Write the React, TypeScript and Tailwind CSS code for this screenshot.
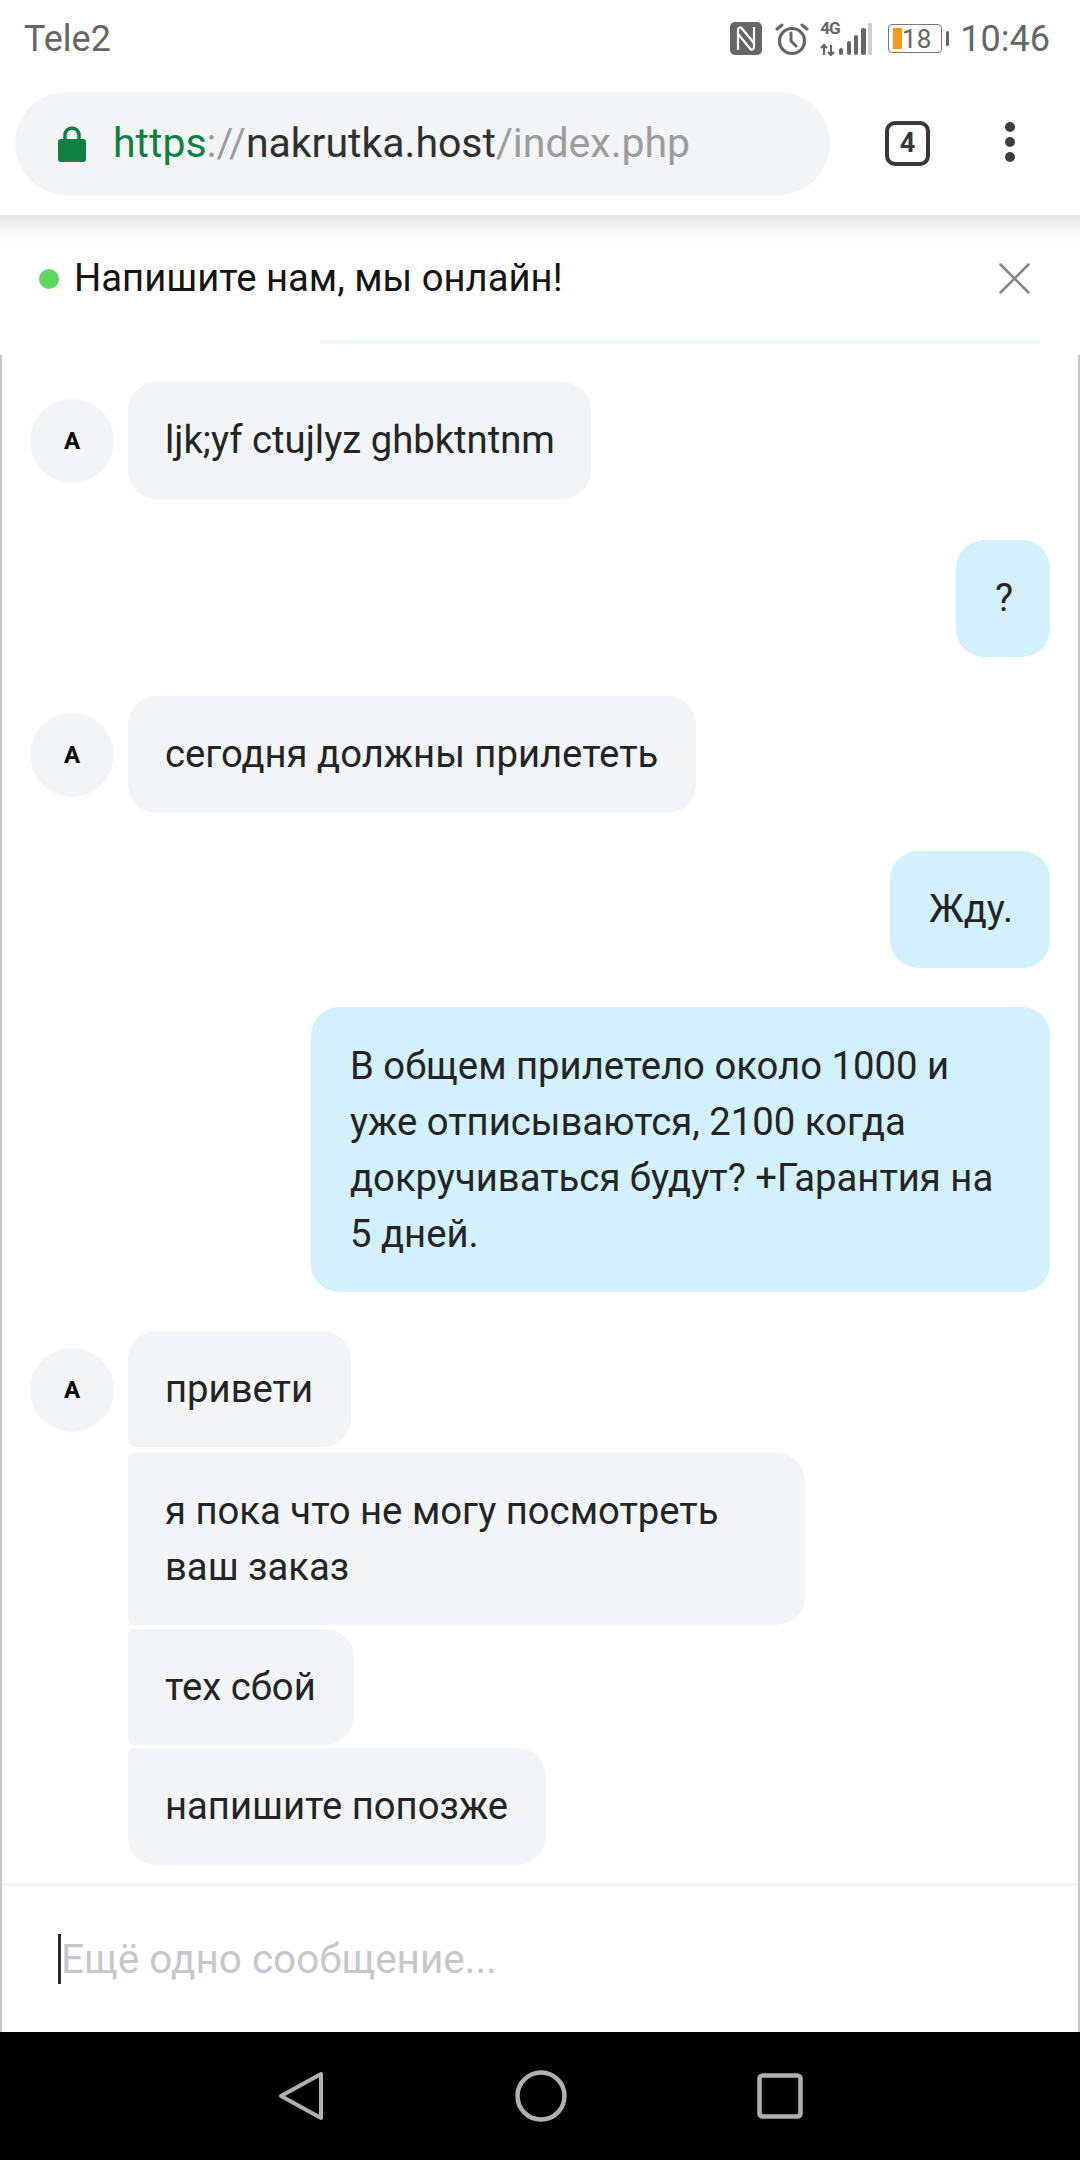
const font = { fontFamily: "Roboto, 'Noto Sans', sans-serif" };

function Incoming({ w, children, cls = "rounded-[28px] pb-[31px] whitespace-nowrap" }: { w: string; children: React.ReactNode; cls?: string }) {
  return <div className={`${w} ${cls} bg-[#f2f4f6] px-[37px] pt-[30px] text-[38.25px] leading-[56px] text-[#222426]`}>{children}</div>;
}
function Outgoing({ w, children, cls = "" }: { w: string; children: React.ReactNode; cls?: string }) {
  return <div className={`${w} ${cls} self-end rounded-[28px] bg-[#d2f1fc] px-[39px] text-[38.25px] leading-[56px] text-[#222426]`}>{children}</div>;
}
function Avatar() {
  return <div className="flex h-[84px] w-[84px] shrink-0 items-center justify-center rounded-full bg-[#f2f4f6] text-[24px] font-bold text-black">A</div>;
}

export default function App() {
  return (
    <div className="flex h-[2160px] w-[1080px] flex-col overflow-hidden bg-white font-['Roboto']" style={font}>
      {/* status bar */}
      <div className="flex h-[75px] shrink-0 items-center justify-between pl-[24px] pr-[30px] pt-[2px] text-[#666666]">
        <span className="text-[36px] leading-none">Tele2</span>
        <div className="flex items-center">
          <svg width="32" height="33" viewBox="0 0 32 33" className="mr-[13px]">
            <rect width="32" height="33" rx="5" fill="#666" />
            <path d="M8 28V8c0-2.500 2.500-3.500 4-1.500L24 21" fill="none" stroke="#fff" strokeWidth="2.200" />
            <path d="M24 5v20c0 2.500-2.500 3.500-4 1.500L8 12" fill="none" stroke="#fff" strokeWidth="2.200" />
          </svg>
          <svg width="34" height="34" viewBox="0 0 34 34" className="mr-[10px]" fill="none" stroke="#666" strokeLinecap="round">
            <circle cx="17" cy="19" r="12.500" strokeWidth="3.200" />
            <path d="M16 11v8l5 5" strokeWidth="3" />
            <path d="M2 7l5-4M32 7l-5-4" strokeWidth="3" />
          </svg>
          <div className="relative mr-[13px] h-[34px] w-[56px]">
            <span className="absolute left-[1px] top-[-3px] text-[17px] font-bold leading-[18px] tracking-[-1px] text-[#666]">4G</span>
            <svg width="56" height="34" viewBox="0 0 56 34" className="absolute left-0 top-0">
              <path d="M5 33V23M2 26l3-3 3 3" fill="none" stroke="#666" strokeWidth="2.200" />
              <path d="M12 23v10M9 30l3 3 3-3" fill="none" stroke="#666" strokeWidth="2.200" />
              <rect x="20" y="26" width="4" height="7" rx="2" fill="#666" />
              <rect x="28" y="19" width="4" height="14" rx="2" fill="#666" />
              <rect x="35" y="13" width="4" height="20" rx="2" fill="#666" />
              <rect x="42" y="6" width="5" height="27" rx="2" fill="#666" />
              <rect x="49" y="1" width="4" height="32" rx="1" fill="#cfcfcf" />
            </svg>
          </div>
          <div className="relative mr-[4px] flex h-[29px] w-[54px] items-center justify-end rounded-[4px] border border-[#777] pr-[10px] text-[26px] leading-none">
            <span className="absolute left-[4px] top-[3px] h-[21px] w-[9px] bg-[#fa9a1c]" />
            18
          </div>
          <span className="mr-[11px] h-[15px] w-[3px] rounded-sm bg-[#666]" />
          <span className="text-[36px] leading-none">10:46</span>
        </div>
      </div>

      {/* url bar */}
      <div className="flex h-[140px] shrink-0 items-start pl-[15px] pt-[17px]">
        <div className="flex h-[103px] w-[815px] items-center rounded-full bg-[#f2f4f5] pl-[43px] text-[41px] leading-none">
          <svg width="28" height="36" viewBox="0 0 28 36" className="mr-[27px] shrink-0">
            <path d="M7 16V9a7 7 0 0 1 14 0v7" fill="none" stroke="#0f8043" strokeWidth="3.500" />
            <rect y="13" width="28" height="23" rx="3" fill="#0f8043" />
          </svg>
          <span className="text-[#0f8043]">https</span>
          <span className="text-[#9a9c9e]">://</span>
          <span className="text-[#2e3033]">nakrutka.host</span>
          <span className="text-[#9a9c9e]">/index.php</span>
        </div>
        <div className="ml-[55px] mt-[29px] flex h-[45px] w-[45px] items-center justify-center rounded-[10px] border-[4px] border-[#36383b] text-[27px] font-bold leading-none text-[#36383b]">4</div>
        <div className="ml-[75px] mt-[30px] flex flex-col gap-[5px]">
          <span className="h-[10px] w-[10px] rounded-full bg-[#3c3e41]" />
          <span className="h-[10px] w-[10px] rounded-full bg-[#3c3e41]" />
          <span className="h-[10px] w-[10px] rounded-full bg-[#3c3e41]" />
        </div>
      </div>

      {/* chat header */}
      <div className="h-[140px] shrink-0 bg-gradient-to-b from-[#e6e6e6] from-0% via-[#fbfbfb] via-[14%] to-white to-[25%]">
        <div className="flex h-[127px] items-center pl-[39px] pr-[50px]">
          <span className="mr-[15px] h-[20px] w-[20px] rounded-full bg-[#5cd75f]" />
          <span className="text-[38.25px] text-[#151515]">Напишите нам, мы онлайн!</span>
          <svg width="31" height="31" viewBox="0 0 31 31" className="ml-auto" stroke="#858585" strokeWidth="2.500" strokeLinecap="round">
            <path d="M1.500 1.500l28 28M29.500 1.500l-28 28" />
          </svg>
        </div>
        <div className="ml-[320px] mt-[-2px] h-[4px] w-[720px] bg-[#f0fafe]" />
      </div>

      {/* messages */}
      <div className="flex flex-1 flex-col border-x-[2px] border-x-[#c8c8c8] pl-[28px] pr-[28px] pt-[27px]">
        <div className="flex items-center gap-[14px]">
          <Avatar />
          <Incoming w="w-[463px]">ljk;yf ctujlyz ghbktntnm</Incoming>
        </div>
        <Outgoing w="w-[94px]" cls="mt-[41px] pt-[30px] pb-[31px]">?</Outgoing>
        <div className="mt-[39px] flex items-center gap-[14px]">
          <Avatar />
          <Incoming w="w-[568px]">сегодня должны прилететь</Incoming>
        </div>
        <Outgoing w="w-[160px]" cls="mt-[38px] pt-[30px] pb-[31px]">Жду.</Outgoing>
        <Outgoing w="w-[739px]" cls="mt-[39px] pt-[31px] pb-[30px]">
          В общем прилетело около 1000 и уже отписываются, 2100 когда докручиваться будут? +Гарантия на 5 дней.
        </Outgoing>
        <div className="mt-[39px] flex items-start gap-[14px]">
          <div className="mt-[17px]"><Avatar /></div>
          <div className="flex flex-col">
            <Incoming w="w-[223px]" cls="rounded-[28px] rounded-bl-[6px] pb-[30px]">привети</Incoming>
            <Incoming w="w-[677px]" cls="mt-[6px] rounded-[28px] rounded-l-[6px] pb-[30px]">я пока что не могу посмотреть ваш заказ</Incoming>
            <Incoming w="w-[226px]" cls="mt-[4px] rounded-[28px] rounded-l-[6px] pb-[30px]">тех сбой</Incoming>
            <Incoming w="w-[418px]" cls="mt-[3px] rounded-[28px] rounded-tl-[6px] pb-[31px]">напишите попозже</Incoming>
          </div>
        </div>
        <div className="mx-[-28px] mt-[18px] h-[3px] shrink-0 bg-[#f1f2f3]" />
        <div className="flex flex-1 items-center pl-[28px] text-[40.5px] leading-none">
          <span className="h-[50px] w-[3px] bg-[#2c2c2c]" />
          <span className="text-[#c6c7ca]">Ещё одно сообщение...</span>
        </div>
      </div>

      {/* nav bar */}
      <div className="flex h-[128px] shrink-0 items-center justify-center bg-black">
        <div className="flex w-[660px] items-center justify-between pl-[68px] pr-[67px]">
          <svg width="46" height="50" viewBox="0 0 46 50" fill="none" stroke="#b0b0b0" strokeWidth="4" strokeLinejoin="round">
            <path d="M43 3v44L3 25z" />
          </svg>
          <svg width="52" height="52" viewBox="0 0 52 52" fill="none" stroke="#b0b0b0" strokeWidth="4.500">
            <circle cx="26" cy="26" r="23.500" />
          </svg>
          <svg width="46" height="46" viewBox="0 0 46 46" fill="none" stroke="#b0b0b0" strokeWidth="4.500">
            <rect x="2.500" y="2.500" width="41" height="41" rx="3" />
          </svg>
        </div>
      </div>
    </div>
  );
}
